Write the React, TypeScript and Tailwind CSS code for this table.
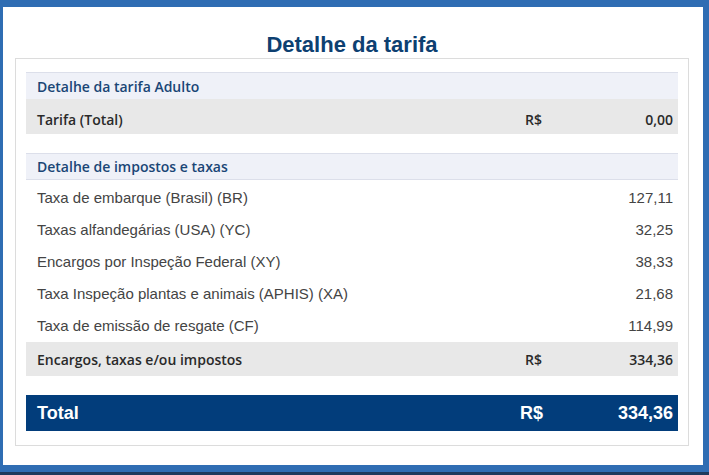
import React from "react";

const taxes: [string, string][] = [
  ["Taxa de embarque (Brasil) (BR)", "127,11"],
  ["Taxas alfandegárias (USA) (YC)", "32,25"],
  ["Encargos por Inspeção Federal (XY)", "38,33"],
  ["Taxa Inspeção plantas e animais (APHIS) (XA)", "21,68"],
  ["Taxa de emissão de resgate (CF)", "114,99"],
];

export default function App() {
  return (
    <div className="w-[709px] h-[475px] bg-[#1f3a5c] overflow-hidden">
      <div className="h-[472px] bg-[#2f6db3] pt-[7px] pl-[3px] pr-[6px] pb-[7px]">
        <div className="h-full bg-white pt-[25px] pl-[12px] pr-[14px]">
          <h1 className="text-center text-[22px] leading-[26px] font-bold text-[#0d4071] font-['Liberation_Sans',Arial,sans-serif]">
            Detalhe da tarifa
          </h1>
          <div className="h-[388px] border border-[#dcdcdc] px-[10px] pt-[13px]">
            <div className="h-[27px] bg-[#eff1f8] border-t border-[#dcdfea] flex items-center pl-[11px] text-[14px] font-semibold text-[#1a4676] font-['Open_Sans',sans-serif]">
              Detalhe da tarifa Adulto
            </div>
            <div className="h-[35px] bg-[#e8e8e8] flex items-center pt-[5px] pl-[11px] pr-[5px] text-[14px] font-semibold text-[#2a2a2a] font-['Open_Sans',sans-serif]">
              <span className="flex-1">Tarifa (Total)</span>
              <span className="w-[100px]">R$</span>
              <span className="w-[48px] text-right">0,00</span>
            </div>
            <div className="h-[19px]" />
            <div className="h-[27px] bg-[#eff1f8] border-t border-b border-[#dcdfea] flex items-center pl-[11px] text-[14px] font-semibold text-[#1a4676] font-['Open_Sans',sans-serif]">
              Detalhe de impostos e taxas
            </div>
            <div className="pt-[2px]">
              {taxes.map(([label, value]) => (
                <div
                  key={label}
                  className="h-[32px] flex items-center pl-[11px] pr-[5px] text-[15px] text-[#444] font-['Liberation_Sans',Arial,sans-serif]"
                >
                  <span className="flex-1">{label}</span>
                  <span className="text-right">{value}</span>
                </div>
              ))}
            </div>
            <div className="h-[34px] bg-[#e8e8e8] flex items-center pl-[11px] pr-[5px] text-[14px] font-semibold text-[#2a2a2a] font-['Open_Sans',sans-serif]">
              <span className="flex-1">Encargos, taxas e/ou impostos</span>
              <span className="w-[100px]">R$</span>
              <span className="w-[48px] text-right">334,36</span>
            </div>
            <div className="h-[19px]" />
            <div className="h-[36px] bg-[#023d7b] flex items-center pl-[11px] pr-[5px] text-[18px] font-bold text-white font-['Liberation_Sans',Arial,sans-serif]">
              <span className="flex-1">Total</span>
              <span className="w-[97px]">R$</span>
              <span className="w-[56px] text-right">334,36</span>
            </div>
          </div>
        </div>
      </div>
    </div>
  );
}
